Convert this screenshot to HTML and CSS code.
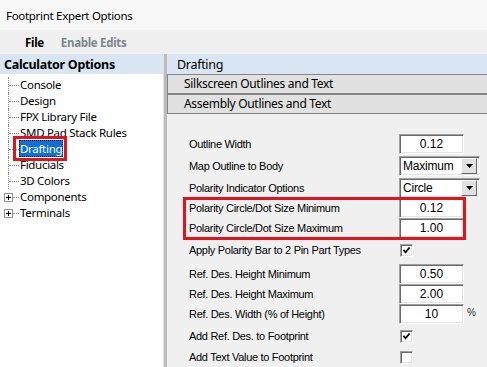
FILE: index.html
```html
<!DOCTYPE html>
<html>
<head>
    <title>Footprint Expert Options</title>
    <link rel="stylesheet" href="styles.css">
</head>
<body>
    <div class="titlebar">Footprint Expert Options</div>
    <div class="menubar">
        <span class="menu">File</span>
        <span class="menu disabled">Enable Edits</span>
    </div>
    <div class="main">
        <div class="sidebar">
            <div class="panel-head bold">Calculator Options</div>
            <ul class="tree">
                <li><span class="twig"><span class="dash"></span></span><span class="node">Console</span></li>
                <li><span class="twig"><span class="dash"></span></span><span class="node">Design</span></li>
                <li><span class="twig"><span class="dash"></span></span><span class="node">FPX Library File</span></li>
                <li><span class="twig"><span class="dash"></span></span><span class="node">SMD Pad Stack Rules</span></li>
                <li class="marked-item"><span class="twig"><span class="dash"></span></span><span class="node selected">Drafting</span><span class="mark tree-mark"></span></li>
                <li><span class="twig"><span class="dash"></span></span><span class="node">Fiducials</span></li>
                <li><span class="twig"><span class="dash"></span></span><span class="node">3D Colors</span></li>
                <li><span class="twig plus"><span class="expander"><svg width="9" height="9" viewBox="0 0 9 9" shape-rendering="crispEdges"><rect x="0.5" y="0.5" width="8" height="8" fill="#fff" stroke="#919191"/><path d="M2 4.5H7M4.5 2V7" stroke="#000"/></svg></span><span class="dash"></span></span><span class="node">Components</span></li>
                <li><span class="twig plus"><span class="expander"><svg width="9" height="9" viewBox="0 0 9 9" shape-rendering="crispEdges"><rect x="0.5" y="0.5" width="8" height="8" fill="#fff" stroke="#919191"/><path d="M2 4.5H7M4.5 2V7" stroke="#000"/></svg></span><span class="dash"></span></span><span class="node">Terminals</span></li>
            </ul>
        </div>
        <div class="splitter"></div>
        <div class="content">
            <div class="panel-head right">Drafting</div>
            <div class="group">Silkscreen Outlines and Text</div>
            <div class="group">Assembly Outlines and Text</div>
            <div class="form">
                <div class="row">
                    <span class="label">Outline Width</span>
                    <span class="field">0.12</span>
                </div>
                <div class="row sp2">
                    <span class="label">Map Outline to Body</span>
                    <span class="combo"><span class="value">Maximum</span><span class="drop"><svg width="7" height="4" viewBox="0 0 7 4"><polygon points="0,0 7,0 3.5,4" fill="#000"/></svg></span></span>
                </div>
                <div class="row sp2">
                    <span class="label">Polarity Indicator Options</span>
                    <span class="combo"><span class="value">Circle</span><span class="drop"><svg width="7" height="4" viewBox="0 0 7 4"><polygon points="0,0 7,0 3.5,4" fill="#000"/></svg></span></span>
                </div>
                <div class="marked">
                    <div class="row">
                        <span class="label">Polarity Circle/Dot Size Minimum</span>
                        <span class="field">0.12</span>
                    </div>
                    <div class="row">
                        <span class="label">Polarity Circle/Dot Size Maximum</span>
                        <span class="field">1.00</span>
                    </div>
                    <span class="mark form-mark"></span>
                </div>
                <div class="row sp2">
                    <span class="label">Apply Polarity Bar to 2 Pin Part Types</span>
                    <span class="check"><svg width="9" height="9" viewBox="0 0 9 9"><polyline points="1.5,3.8 3.5,6.3 7.5,1.5" fill="none" stroke="#000" stroke-width="1.8"/></svg></span>
                </div>
                <div class="row sp4">
                    <span class="label">Ref. Des. Height Minimum</span>
                    <span class="field">0.50</span>
                </div>
                <div class="row">
                    <span class="label">Ref. Des. Height Maximum</span>
                    <span class="field">2.00</span>
                </div>
                <div class="row">
                    <span class="label">Ref. Des. Width (% of Height)</span>
                    <span class="field">10</span>
                    <span class="unit">%</span>
                </div>
                <div class="row sp2">
                    <span class="label">Add Ref. Des. to Footprint</span>
                    <span class="check"><svg width="9" height="9" viewBox="0 0 9 9"><polyline points="1.5,3.8 3.5,6.3 7.5,1.5" fill="none" stroke="#000" stroke-width="1.8"/></svg></span>
                </div>
                <div class="row sp1">
                    <span class="label">Add Text Value to Footprint</span>
                    <span class="check"></span>
                </div>
            </div>
        </div>
    </div>
</body>
</html>
```

FILE: styles.css
```css
body { margin: 0; font-family: "Noto Sans", sans-serif; font-size: 11.5px; letter-spacing: -0.3px; color: #000; background-color: #f0f0f0; height: 367px; overflow: hidden; display: flex; flex-direction: column; }
.titlebar { height: 30px; line-height: 31px; padding-left: 6px; background-color: #f8f8f8; }
.menubar { height: 25px; display: flex; align-items: center; padding-left: 25px; background-color: #f0f0f0; font-weight: bold; }
.menu { margin-right: 17px; }
.menu.disabled { color: #7d8792; }
.main { flex: 1; display: flex; }
.sidebar { width: 163px; background-color: #fff; border-right: 1px solid #e3e3e3; }
.splitter { width: 3px; background-color: #bcbcbc; }
.content { flex: 1; background-color: #f0f0f0; }
.panel-head { height: 20px; line-height: 21px; background-color: #dae5f3; font-size: 12.5px; }
.panel-head.bold { font-weight: bold; padding-left: 4px; }
.panel-head.right { padding-left: 10px; }

.tree { list-style: none; margin: 0; padding: 3px 0 0 0; }
.tree li { display: flex; height: 16px; align-items: stretch; position: relative; }
.twig { display: flex; align-items: center; width: 10px; margin-left: 8px; border-left: 1px dotted #8a8a8a; }
.twig.plus { margin-left: 4px; width: 15px; border-left: none; }
.dash { flex: 1; border-top: 1px dotted #8a8a8a; }
.expander { display: flex; width: 9px; height: 9px; }
.node { line-height: 16px; padding: 0 1px; }
.node.selected { background-color: #0f6fd6; color: #fff; outline: 1px dotted #1a1a1a; outline-offset: -1px; padding: 0 1px 0 1px; margin-top: -1px; height: 17px; line-height: 18px; }

.mark { position: absolute; box-sizing: border-box; border: 3px solid #e3131c; }
.tree-mark { left: 13px; top: -5px; width: 54px; height: 25px; }

.group { height: 20px; box-sizing: border-box; line-height: 18px; padding-left: 16px; background-color: #e1e1e1; border-top: 1px solid #858585; border-bottom: 1px solid #858585; border-left: 1px solid #858585; font-size: 12px; }

.form { padding: 20px 0 0 22px; font-family: "Liberation Sans", Arial, sans-serif; font-size: 11px; }
.row { display: flex; align-items: center; height: 20px; }
.row.sp1 { margin-top: 1px; }
.row.sp2 { margin-top: 2px; }
.row.sp4 { margin-top: 4px; }
.label { width: 210px; }
.marked { position: relative; }
.form-mark { left: -6px; top: -1px; width: 283px; height: 43px; }

.field, .combo, .check { box-sizing: border-box; background-color: #fff; border: 1px solid; border-color: #a0a0a0 #fff #fff #a0a0a0; box-shadow: inset 1px 1px #696969, inset -1px -1px #e3e3e3; letter-spacing: 0; }
.field { width: 65px; height: 20px; text-align: center; line-height: 18px; font-size: 12px; }
.combo { width: 81px; height: 20px; display: flex; align-items: center; padding: 2px; font-size: 12px; letter-spacing: -0.2px; }
.combo .value { flex: 1; padding-left: 1px; }
.drop { width: 16px; height: 16px; box-sizing: border-box; display: flex; align-items: center; justify-content: center; background-color: #e1e1e1; border: 1px solid; border-color: #fff #696969 #696969 #fff; }
.check { width: 13px; height: 13px; margin-left: 1px; display: flex; align-items: center; justify-content: center; }
.unit { margin-left: 3px; margin-top: -4px; font-size: 10px; color: #333; letter-spacing: 0; }
```
